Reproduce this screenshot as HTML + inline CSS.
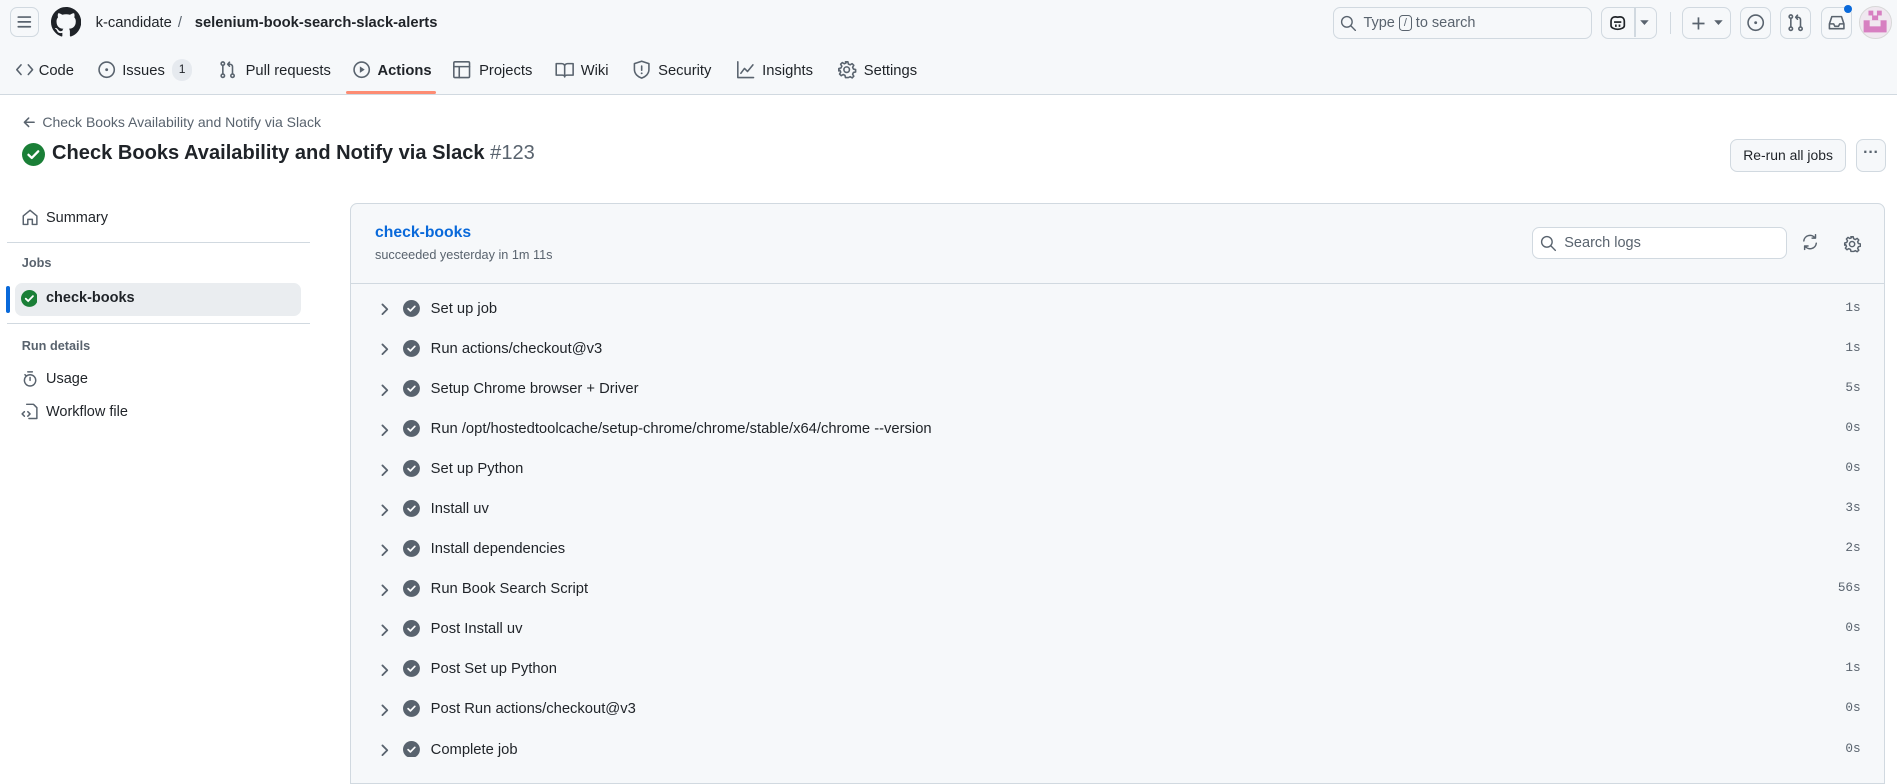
<!DOCTYPE html>
<html><head><meta charset="utf-8"><style>
html{zoom:1.2098}
body{margin:0;width:1568px;height:644px;overflow:hidden;background:#fff;font-family:"Liberation Sans",sans-serif;color:#1f2328;position:relative}
.a{position:absolute}
.hdr{left:0;top:0;width:1568px;height:78px;background:#f6f8fa;border-bottom:1px solid #d1d9e0}
.btn{border:1px solid #d1d9e0;border-radius:6px;background:#f6f8fa;box-sizing:border-box}
svg{display:block}
.tt{top:51px;font-size:12.2px;color:#1f2328;line-height:16px}
.ti{top:50px}
.ic{fill:none;stroke:#59636e;stroke-width:1.3;stroke-linecap:round;stroke-linejoin:round}
.step{left:290px;width:1268px;height:33px}
.step .chev{position:absolute;left:24px;top:11px}
.step .ck{position:absolute;left:43px;top:9px}
.step .t{position:absolute;left:66px;top:9px;font-size:12.2px;color:#1f2328;line-height:16px}
.step .d{position:absolute;right:20px;top:9px;font-family:"Liberation Mono",monospace;font-size:10.5px;color:#59636e}
.side{font-size:12px;left:38px;line-height:16px}
</style></head><body>
<div class="a hdr"></div>
<div class="a btn" style="left:8px;top:6px;width:24px;height:25px"><svg width="22" height="23" viewBox="0 0 22 23"><path d="M6 7.5h10M6 11.5h10M6 15.5h10" stroke="#59636e" stroke-width="1.4" stroke-linecap="round"/></svg></div>
<svg class="a" style="left:42px;top:6px" width="25" height="25" viewBox="0 0 16 16"><path fill="#1f2328" d="M8 0C3.58 0 0 3.58 0 8c0 3.54 2.29 6.53 5.47 7.59.4.07.55-.17.55-.38 0-.19-.01-.82-.01-1.49-2.01.37-2.53-.49-2.69-.94-.09-.23-.48-.94-.82-1.130-.28-.15-.68-.52-.01-.53.63-.01 1.08.58 1.23.82.72 1.21 1.87.87 2.33.66.07-.52.28-.87.51-1.07-1.78-.2-3.64-.89-3.64-3.95 0-.87.31-1.59.82-2.150-.08-.2-.36-1.02.08-2.12 0 0 .67-.21 2.2.82.64-.18 1.32-.27 2-.27.68 0 1.36.09 2 .27 1.53-1.04 2.2-.82 2.2-.82.44 1.1.16 1.92.08 2.12.51.56.82 1.27.82 2.15 0 3.07-1.87 3.75-3.65 3.95.29.25.54.73.54 1.48 0 1.07-.01 1.93-.01 2.2 0 .21.15.46.55.38A8.013 8.013 0 0016 8c0-4.42-3.58-8-8-8z"/></svg>
<div class="a" style="left:79px;top:12px;font-size:12.2px">k-candidate</div>
<div class="a" style="left:147px;top:12px;font-size:12.2px;color:#59636e">/</div>
<div class="a" style="left:161px;top:12px;font-size:12.2px;font-weight:bold">selenium-book-search-slack-alerts</div>
<div class="a btn" style="left:1102px;top:6px;width:214px;height:26px"></div>
<svg class="a" style="left:1108px;top:12px" width="14" height="14" viewBox="0 0 16 16"><circle cx="6.5" cy="6.5" r="5" class="ic" stroke-width="1.5"/><path d="M10.2 10.2l4.3 4.3" class="ic" stroke-width="1.5"/></svg>
<div class="a" style="left:1127px;top:12px;font-size:12px;color:#59636e">Type <span style="display:inline-block;border:1px solid #59636e;border-radius:3px;font-size:9px;width:9px;height:12px;line-height:12px;text-align:center;vertical-align:1px">/</span> to search</div>
<div class="a btn" style="left:1323px;top:6px;width:47px;height:26px"></div>
<div class="a" style="left:1351px;top:7px;width:1px;height:24px;background:#d1d9e0"></div>
<svg class="a" style="left:1329px;top:11px" width="16" height="16" viewBox="0 0 16 16"><path d="M2.5 7c0-3 2-4.5 5.5-3.5C11.5 2.5 13.5 4 13.5 7v3.5c0 1.5-2.5 3-5.5 3s-5.5-1.5-5.5-3z" fill="none" stroke="#1f2328" stroke-width="1.4"/><path d="M5 7.5h6" stroke="#1f2328" stroke-width="1.4"/><path d="M6.5 9.5v2M9.5 9.5v2" stroke="#1f2328" stroke-width="1.4"/></svg>
<svg class="a" style="left:1355px;top:16px" width="9" height="6"><path d="M1 1h7L4.5 5z" fill="#59636e"/></svg>
<div class="a" style="left:1380px;top:10px;width:1px;height:18px;background:#d1d9e0"></div>
<div class="a btn" style="left:1390px;top:6px;width:41px;height:26px"></div>
<svg class="a" style="left:1397px;top:12px" width="14" height="14"><path d="M7 2v10M2 7h10" stroke="#59636e" stroke-width="1.4"/></svg>
<svg class="a" style="left:1416px;top:16px" width="9" height="6"><path d="M1 1h7L4.5 5z" fill="#59636e"/></svg>
<div class="a btn" style="left:1438px;top:6px;width:26px;height:26px"></div>
<svg class="a" style="left:1443px;top:11px" width="16" height="16" viewBox="0 0 16 16"><circle cx="8" cy="8" r="6.3" class="ic"/><circle cx="8" cy="8" r="1.2" fill="#59636e"/></svg>
<div class="a btn" style="left:1471px;top:6px;width:26px;height:26px"></div>
<svg class="a" style="left:1476px;top:11px" width="16" height="16" viewBox="0 0 16 16"><circle cx="4" cy="3" r="1.4" class="ic"/><circle cx="4" cy="13" r="1.4" class="ic"/><circle cx="12" cy="13" r="1.4" class="ic"/><path d="M4 4.5v7M12 11.5V5.5c0-1-1-2-2-2H8M9.5 1.8L8 3.5l1.5 1.6" class="ic"/></svg>
<div class="a btn" style="left:1505px;top:6px;width:26px;height:26px"></div>
<svg class="a" style="left:1510px;top:11px" width="16" height="16" viewBox="0 0 16 16"><path d="M2 9l2-6h8l2 6v4H2zM2 9h3.5l1 2h3l1-2H14" class="ic"/></svg>
<div class="a" style="left:1524px;top:4px;width:7px;height:7px;border-radius:50%;background:#0969da"></div>
<div class="a" style="left:1537px;top:5px;width:27px;height:27px;border-radius:50%;background:#f0e8f0;border:1px solid #d8d8d8;box-sizing:border-box;overflow:hidden">
<svg width="25" height="25" viewBox="0 0 25 25"><rect x="7" y="3" width="4" height="4" fill="#d77fc1"/><rect x="14" y="3" width="4" height="4" fill="#d77fc1"/><rect x="10" y="7" width="5" height="4" fill="#d77fc1"/><rect x="3" y="11" width="19" height="10" fill="#d77fc1"/><rect x="8" y="11" width="9" height="5" fill="#f0e8f0"/></svg></div>
<svg class="a ti" style="left:12px" width="16" height="16" viewBox="0 0 16 16"><path d="M5 4L1.5 8 5 12M11 4l3.5 4-3.5 4" class="ic"/></svg><div class="a tt" style="left:32px">Code</div>
<svg class="a ti" style="left:80px" width="16" height="16" viewBox="0 0 16 16"><circle cx="8" cy="8" r="6.3" class="ic"/><circle cx="8" cy="8" r="1.2" fill="#59636e"/></svg><div class="a tt" style="left:101px">Issues</div>
<div class="a" style="left:142px;top:49px;width:17px;height:18px;border-radius:9px;background:#e6eaef;font-size:10px;line-height:18px;text-align:center">1</div>
<svg class="a ti" style="left:180px" width="16" height="16" viewBox="0 0 16 16"><circle cx="4" cy="3" r="1.4" class="ic"/><circle cx="4" cy="13" r="1.4" class="ic"/><circle cx="12" cy="13" r="1.4" class="ic"/><path d="M4 4.5v7M12 11.5V5.5c0-1-1-2-2-2H8M9.5 1.8L8 3.5l1.5 1.6" class="ic"/></svg><div class="a tt" style="left:203px">Pull requests</div>
<svg class="a ti" style="left:291px" width="16" height="16" viewBox="0 0 16 16"><circle cx="8" cy="8" r="6.3" class="ic"/><path d="M6.5 5.3v5.4L10.5 8z" fill="#59636e"/></svg><div class="a tt" style="left:312px;font-weight:bold">Actions</div>
<div class="a" style="left:286px;top:75px;width:74px;height:3px;background:#fd8c73;border-radius:2px"></div>
<svg class="a ti" style="left:374px" width="16" height="16" viewBox="0 0 16 16"><rect x="1.5" y="1.5" width="13" height="13" rx="1" class="ic"/><path d="M1.5 5.5h13M6 5.5v9" class="ic"/></svg><div class="a tt" style="left:396px">Projects</div>
<svg class="a ti" style="left:459px" width="16" height="16" viewBox="0 0 16 16"><path d="M1 3h4.5c1.5 0 2.5 1 2.5 2v9c0-1-1-1.5-2-1.5H1zM15 3h-4.5C9 3 8 4 8 5v9c0-1 1-1.5 2-1.5H15z" class="ic"/></svg><div class="a tt" style="left:480px">Wiki</div>
<svg class="a ti" style="left:522px" width="16" height="16" viewBox="0 0 16 16"><path d="M8 1l6 2v5c0 3.5-3 6-6 7-3-1-6-3.5-6-7V3z" class="ic"/><path d="M8 5v3.5" class="ic"/><circle cx="8" cy="11" r=".8" fill="#59636e"/></svg><div class="a tt" style="left:544px">Security</div>
<svg class="a ti" style="left:608px" width="16" height="16" viewBox="0 0 16 16"><path d="M1.5 1.5v13h13M4 11l3-4 2.5 2.5L14 4" class="ic"/></svg><div class="a tt" style="left:630px">Insights</div>
<svg class="a ti" style="left:692px" width="16" height="16" viewBox="0 0 16 16"><circle cx="8" cy="8" r="2.3" class="ic"/><path d="M7 1.5h2l.4 1.8 1.5.7 1.6-1 1.4 1.4-1 1.6.7 1.5 1.8.4v2l-1.8.4-.7 1.5 1 1.6-1.4 1.4-1.6-1-1.5.7L9 14.5H7l-.4-1.8-1.5-.7-1.6 1-1.4-1.4 1-1.6-.7-1.5L1.5 9V7l1.8-.4.7-1.5-1-1.6 1.4-1.4 1.6 1 1.5-.7z" class="ic"/></svg><div class="a tt" style="left:714px">Settings</div>
<svg class="a" style="left:18px;top:95px" width="12" height="12" viewBox="0 0 12 12"><path d="M10 6H2.5M5.5 2.5L2 6l3.5 3.5" class="ic"/></svg>
<div class="a" style="left:35px;top:94px;font-size:11.6px;color:#59636e">Check Books Availability and Notify via Slack</div>
<svg class="a" style="left:18px;top:118px" width="19" height="19" viewBox="0 0 16 16"><circle cx="8" cy="8" r="8" fill="#1a7f37"/><path d="M4.5 8.2l2.3 2.2 4.5-4.6" stroke="#fff" stroke-width="1.6" fill="none" stroke-linecap="round" stroke-linejoin="round"/></svg>
<div class="a" style="left:43px;top:117px;font-size:16.6px;font-weight:bold">Check Books Availability and Notify via Slack <span style="font-weight:normal;color:#59636e">#123</span></div>
<div class="a btn" style="left:1430px;top:115px;width:96px;height:27px;font-size:11.5px;line-height:25px;text-align:center">Re-run all jobs</div>
<div class="a btn" style="left:1534px;top:115px;width:25px;height:27px;text-align:center;line-height:22px;font-weight:bold;color:#59636e;font-size:13px">···</div>
<svg class="a" style="left:17px;top:172px" width="15" height="15" viewBox="0 0 16 16"><path d="M2 7l6-5 6 5v7.5h-4V10H6v4.5H2z" class="ic"/></svg>
<div class="a side" style="top:173px">Summary</div>
<div class="a" style="left:6px;top:200px;width:250px;height:1px;background:#d1d9e0"></div>
<div class="a" style="left:18px;top:212px;font-size:10.5px;font-weight:bold;color:#59636e">Jobs</div>
<div class="a" style="left:12px;top:234px;width:237px;height:27px;background:#eaedf0;border-radius:6px"></div>
<div class="a" style="left:5px;top:236px;width:3px;height:23px;background:#0969da;border-radius:2px"></div>
<svg class="a" style="left:17px;top:240px" width="14" height="14" viewBox="0 0 16 16"><circle cx="8" cy="8" r="8" fill="#1a7f37"/><path d="M4.5 8.2l2.3 2.2 4.5-4.6" stroke="#fff" stroke-width="1.7" fill="none" stroke-linecap="round"/></svg>
<div class="a side" style="top:239px;font-weight:bold">check-books</div>
<div class="a" style="left:6px;top:267px;width:250px;height:1px;background:#d1d9e0"></div>
<div class="a" style="left:18px;top:280px;font-size:10.5px;font-weight:bold;color:#59636e">Run details</div>
<svg class="a" style="left:17px;top:305px" width="15" height="16" viewBox="0 0 16 16"><circle cx="8" cy="9.5" r="5" class="ic"/><path d="M6 2h4M8 9.5V7M3.5 4.5l1 1" class="ic"/></svg>
<div class="a side" style="top:306px">Usage</div>
<svg class="a" style="left:17px;top:332px" width="15" height="16" viewBox="0 0 16 16"><path d="M5 1.5h6l3 3v9.5H7M3 8L1 10l2 2M6 8l2 2-2 2" class="ic"/></svg>
<div class="a side" style="top:333px">Workflow file</div>
<div class="a" style="left:289px;top:168px;width:1269px;height:480px;background:#f6f8fa;border:1px solid #d1d9e0;border-radius:6px 6px 0 0;box-sizing:border-box"></div>
<div class="a" style="left:290px;top:234px;width:1268px;height:1px;background:#d1d9e0"></div>
<div class="a" style="left:310px;top:185px;font-size:13px;font-weight:bold;color:#0969da">check-books</div>
<div class="a" style="left:310px;top:205px;font-size:10.5px;color:#59636e">succeeded yesterday in 1m 11s</div>
<div class="a" style="left:1266px;top:188px;width:211px;height:26px;background:#fff;border:1px solid #d1d9e0;border-radius:6px;box-sizing:border-box"></div>
<svg class="a" style="left:1273px;top:194px" width="14" height="14" viewBox="0 0 16 16"><circle cx="6.5" cy="6.5" r="5" class="ic" stroke-width="1.5"/><path d="M10.2 10.2l4.3 4.3" class="ic" stroke-width="1.5"/></svg>
<div class="a" style="left:1293px;top:194px;font-size:12px;color:#59636e">Search logs</div>
<svg class="a" style="left:1489px;top:193px" width="15" height="15" viewBox="0 0 16 16"><path d="M2.5 7a5.5 5.5 0 0 1 10-2.5M13.5 9a5.5 5.5 0 0 1-10 2.5M12.8 1.5v3h-3M3.2 14.5v-3h3" class="ic"/></svg>
<svg class="a" style="left:1523px;top:194px" width="15" height="15" viewBox="0 0 16 16"><circle cx="8" cy="8" r="2.3" class="ic"/><path d="M7 1.5h2l.4 1.8 1.5.7 1.6-1 1.4 1.4-1 1.6.7 1.5 1.8.4v2l-1.8.4-.7 1.5 1 1.6-1.4 1.4-1.6-1-1.5.7L9 14.5H7l-.4-1.8-1.5-.7-1.6 1-1.4-1.4 1-1.6-.7-1.5L1.5 9V7l1.8-.4.7-1.5-1-1.6 1.4-1.4 1.6 1 1.5-.7z" class="ic"/></svg>
<div id="steps"></div>
<script>
var s=[["Set up job","1s"],["Run actions/checkout@v3","1s"],["Setup Chrome browser + Driver","5s"],["Run /opt/hostedtoolcache/setup-chrome/chrome/stable/x64/chrome --version","0s"],["Set up Python","0s"],["Install uv","3s"],["Install dependencies","2s"],["Run Book Search Script","56s"],["Post Install uv","0s"],["Post Set up Python","1s"],["Post Run actions/checkout@v3","0s"],["Complete job","0s"]];
var h="";s.forEach(function(x,i){var y=239+i*33.1;h+='<div class="a step" style="top:'+y+'px"><svg class="chev" width="8" height="12" viewBox="0 0 8 12"><path d="M2 2l4 4-4 4" fill="none" stroke="#59636e" stroke-width="1.5" stroke-linecap="round" stroke-linejoin="round"/></svg><svg class="ck" width="14" height="14" viewBox="0 0 16 16"><circle cx="8" cy="8" r="8" fill="#59636e"/><path d="M4.8 8.2l2.2 2.1 4.2-4.3" stroke="#fff" stroke-width="1.6" fill="none" stroke-linecap="round" stroke-linejoin="round"/></svg><div class="t">'+x[0]+'</div><div class="d">'+x[1]+'</div></div>';});
document.getElementById("steps").innerHTML=h;
</script>
</body></html>
